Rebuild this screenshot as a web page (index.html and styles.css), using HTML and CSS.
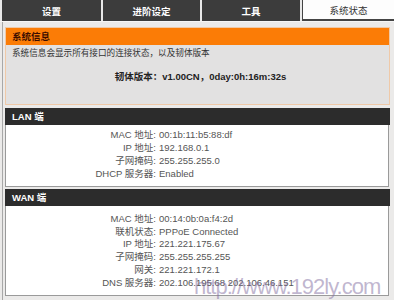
FILE: index.html
```html
<!DOCTYPE html>
<html lang="zh-CN">
<head>
<meta charset="utf-8">
<title>系统状态</title>
<link rel="stylesheet" href="styles.css">
</head>
<body>
<nav class="tabs">
  <div class="tab">设置</div>
  <div class="tab">进阶设定</div>
  <div class="tab">工具</div>
  <div class="tab active">系统状态</div>
</nav>
<main class="page">
  <section class="box info">
    <h2 class="info-head">系统信息</h2>
    <div class="info-body">
      <p class="desc">系统信息会显示所有接口的连接状态，以及韧体版本</p>
      <p class="fw">韧体版本：v1.00CN，0day:0h:16m:32s</p>
    </div>
  </section>
  <section class="box panel">
    <h2 class="panel-head">LAN 端</h2>
    <div class="rows lan">
      <span class="k">MAC 地址:</span><span class="v">00:1b:11:b5:88:df</span>
      <span class="k">IP 地址:</span><span class="v">192.168.0.1</span>
      <span class="k">子网掩码:</span><span class="v">255.255.255.0</span>
      <span class="k">DHCP 服务器:</span><span class="v">Enabled</span>
    </div>
  </section>
  <section class="box panel">
    <h2 class="panel-head">WAN 端</h2>
    <div class="rows wan">
      <span class="k">MAC 地址:</span><span class="v">00:14:0b:0a:f4:2d</span>
      <span class="k">联机状态:</span><span class="v">PPPoE Connected</span>
      <span class="k">IP 地址:</span><span class="v">221.221.175.67</span>
      <span class="k">子网掩码:</span><span class="v">255.255.255.255</span>
      <span class="k">网关:</span><span class="v">221.221.172.1</span>
      <span class="k">DNS 服务器:</span><span class="v">202.106.195.68 202.106.46.151</span>
    </div>
  </section>
</main>
<div class="watermark">http://www.192ly.com</div>
</body>
</html>
```
FILE: styles.css
```css
html, body {
  margin: 0;
  padding: 0;
}
body {
  width: 394px;
  height: 300px;
  overflow: hidden;
  position: relative;
  background: #ebeae9;
  font-family: "Liberation Sans", "Noto Sans CJK SC", sans-serif;
  color: #555;
}
.tabs {
  display: grid;
  grid-template-columns: 99px 97px 98px 1fr;
  gap: 2px;
  padding-left: 2px;
  height: 21px;
  background: #e8e8e8;
  border-bottom: 1px solid #f6f6f6;
}
.tab {
  background: #3c3c3c;
  color: #fff;
  font-weight: bold;
  font-size: 9.5px;
  display: flex;
  align-items: center;
  justify-content: center;
}
.tab.active {
  background: #fdfdfd;
  color: #333;
  font-weight: normal;
  border-left: 1px solid #444;
  border-bottom: 2px solid #444;
}
.page {
  box-sizing: border-box;
  height: 278px;
  margin-left: 2px;
  border-left: 1px solid #a8a8a8;
  padding: 5px 4px 0 2px;
  display: flex;
  flex-direction: column;
  gap: 3px;
}
.box {
  margin: 0;
}
.info {
  border: 1px solid #efc9a8;
  background: #e2e1e1;
}
.info-head {
  margin: 0;
  height: 17px;
  background: #fb7c06;
  color: #3a0c00;
  font-size: 9.5px;
  font-weight: bold;
  line-height: 17px;
  padding-left: 6px;
}
.info-body {
  padding: 1px 0 20px 6px;
}
.desc {
  margin: 0;
  font-size: 8.6px;
  line-height: 14px;
  color: #333;
}
.fw {
  margin: 10px 0 0;
  font-size: 9.5px;
  font-weight: bold;
  line-height: 14px;
  color: #222;
  text-align: center;
}
.panel {
  display: flex;
  flex-direction: column;
}
.panel + .panel {
  margin-top: -1px;
}
.panel-head {
  margin: 0;
  height: 17px;
  background: #2c2c2c;
  color: #fff;
  font-size: 9.5px;
  font-weight: bold;
  line-height: 17px;
  padding-left: 7px;
}
.rows {
  background: #fff;
  border: 1px solid #9a9a9a;
  border-top: none;
  margin-right: 1px;
  display: grid;
  grid-template-columns: 150px 1fr;
  column-gap: 3px;
  font-size: 9.5px;
  line-height: 13px;
  padding: 3px 0 6px;
}
.wan {
  line-height: 12.7px;
  padding: 7px 0 6px;
}
.k {
  text-align: right;
}
.v {
  white-space: nowrap;
}
.watermark {
  position: absolute;
  left: 194px;
  top: 276px;
  font-size: 22px;
  letter-spacing: -1px;
  line-height: 22px;
  color: rgba(130, 110, 160, 0.5);
  font-family: "Liberation Sans", sans-serif;
  white-space: nowrap;
}
```
